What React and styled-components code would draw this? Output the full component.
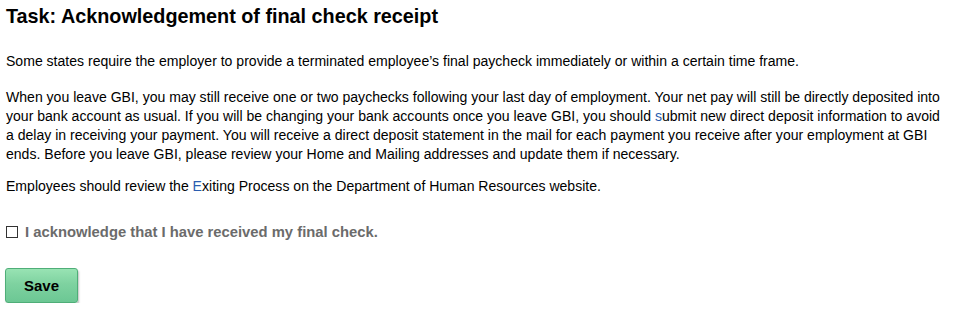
import React from "react";
import styled, { createGlobalStyle } from "styled-components";

const Global = createGlobalStyle`
  body { margin: 0; background: #fff; font-family: "Liberation Sans", Arial, sans-serif; }
`;

const Page = styled.div`
  padding: 5px 4px 0 6px;
  color: #000;
`;

const Title = styled.h1`
  font-size: 19.8px;
  font-weight: bold;
  line-height: 22px;
  margin: 0 0 25px 0;
`;

const Para = styled.p`
  font-size: 14.05px;
  line-height: 19px;
  margin: 0 0 ${(p) => p.$gap || 14}px 0;
  color: #000;
`;

const Link = styled.span`
  color: #2a5db0;
`;

const CheckRow = styled.label`
  display: flex;
  align-items: center;
  gap: 7px;
  margin-top: 28px;
  font-size: 14.8px;
  font-weight: bold;
  color: #6b6b6b;
`;

const Box = styled.span`
  width: 10px;
  height: 10px;
  border: 1px solid #333;
  background: #fff;
  flex: none;
`;

const SaveButton = styled.button`
  margin-top: 28px;
  width: 73px;
  height: 35px;
  margin-left: -1px;
  border: 1px solid #4fae78;
  border-radius: 3px;
  background: linear-gradient(#98e3b3 0%, #7ed2a0 45%, #6cc794 100%);
  box-shadow: 1px 2px 2px rgba(0, 0, 0, 0.25);
  font-family: "Liberation Sans", Arial, sans-serif;
  font-size: 15px;
  font-weight: bold;
  color: #000;
  cursor: pointer;
`;

export default function App() {
  return (
    <Page>
      <Global />
      <Title>Task: Acknowledgement of final check receipt</Title>
      <Para $gap={17}>
        Some states require the employer to provide a terminated employee’s final paycheck immediately or within a certain time frame.
      </Para>
      <Para $gap={13}>
        When you leave GBI, you may still receive one or two paychecks following your last day of employment. Your net pay will still be directly deposited into your bank account as usual. If you will be changing your bank accounts once you leave GBI, you should <Link>s</Link>ubmit new direct deposit information to avoid a delay in receiving your payment. You will receive a direct deposit statement in the mail for each payment you receive after your employment at GBI ends. Before you leave GBI, please review your Home and Mailing addresses and update them if necessary.
      </Para>
      <Para $gap={0}>
        Employees should review the <Link>E</Link>xiting Process on the Department of Human Resources website.
      </Para>
      <CheckRow>
        <Box />
        I acknowledge that I have received my final check.
      </CheckRow>
      <SaveButton>Save</SaveButton>
    </Page>
  );
}
